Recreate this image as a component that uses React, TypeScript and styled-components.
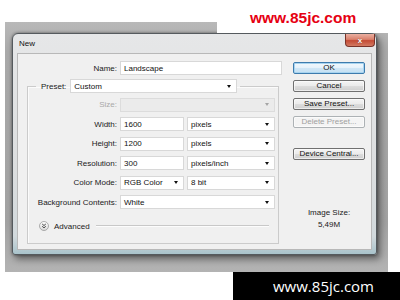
import React from 'react';
import styled, { createGlobalStyle } from 'styled-components';

const Global = createGlobalStyle`
  html, body { margin: 0; padding: 0; background: #fff; }
  body { width: 400px; height: 300px; overflow: hidden; font-family: "Liberation Sans", Arial, sans-serif; }
  * { box-sizing: border-box; }
`;

const Page = styled.div`
  position: relative;
  width: 400px;
  height: 300px;
  background: #fff;
  overflow: hidden;
`;

const Backdrop = styled.div`
  margin: 22px 0 0 5px;
  width: 383px;
  height: 250px;
  padding: 11px 0 0 7px;
  background: linear-gradient(to bottom, #b9b9b9 0%, #a9a9a9 12%, #a2a2a2 80%, #b3b3b3 100%);
`;

const Dialog = styled.div`
  width: 365px;
  height: 222px;
  display: flex;
  flex-direction: column;
  border: 1px solid #555a5e;
  border-radius: 6px 6px 3px 3px;
  background: linear-gradient(to bottom, #e6e7e8 0%, #dcdedf 60%, #d2d9dc 92%, #a9c3cb 100%);
  box-shadow: 0 0 3px rgba(0, 0, 0, 0.45), 3px 4px 7px rgba(0, 0, 0, 0.45);
`;

const TitleBar = styled.div`
  height: 19px;
  display: flex;
  align-items: flex-start;
  padding-left: 6px;
  flex-shrink: 0;
`;

const Title = styled.span`
  font-size: 8px;
  line-height: 19px;
  color: #111;
`;

const CloseButton = styled.div`
  margin-left: auto;
  margin-right: 1px;
  width: 30px;
  height: 13px;
  border: 1px solid #7a3329;
  border-top: none;
  border-radius: 0 0 4px 4px;
  background: linear-gradient(to bottom, #eab0a2 0%, #d9806c 45%, #c44b35 55%, #d27a62 100%);
  color: #fff;
  font-size: 8px;
  font-weight: bold;
  display: flex;
  align-items: center;
  justify-content: center;
  text-shadow: 0 0 1px #6a2a20;
`;

const Client = styled.div`
  margin: 0 4px;
  height: 197px;
  border: 1px solid #b8b8b8;
  background: #f0f0f0;
  display: flex;
`;

const FormColumn = styled.div`
  width: 275px;
  display: flex;
  flex-direction: column;
`;

const Row = styled.div<{ $mt?: number }>`
  display: flex;
  align-items: center;
  gap: 3px;
  height: 14px;
  margin-top: ${p => p.$mt ?? 0}px;
`;

const Label = styled.span<{ $w?: number; $disabled?: boolean }>`
  width: ${p => (p.$w ? `${p.$w}px` : 'auto')};
  flex-shrink: 0;
  text-align: right;
  font-size: 8px;
  color: ${p => (p.$disabled ? '#a8a8a8' : '#1a1a1a')};
  white-space: nowrap;
`;

const Field = styled.div<{ $w: number; $disabled?: boolean }>`
  width: ${p => p.$w}px;
  height: 14px;
  flex-shrink: 0;
  background: ${p => (p.$disabled ? '#ebebeb' : '#fff')};
  border: 1px solid ${p => (p.$disabled ? '#dcdcdc' : '#d8d8d8')};
  display: flex;
  align-items: center;
  justify-content: space-between;
  padding: 0 5px 0 3px;
  font-size: 8px;
  color: #111;
  white-space: nowrap;
`;

const Caret = styled.span<{ $disabled?: boolean }>`
  width: 0;
  height: 0;
  border-left: 2.5px solid transparent;
  border-right: 2.5px solid transparent;
  border-top: 3px solid ${p => (p.$disabled ? '#a5a5a5' : '#111')};
`;

const Group = styled.fieldset`
  margin: 4px 0 0 9px;
  padding: 0;
  width: 252px;
  min-inline-size: 0;
  border: 1px solid #cbcbcb;
  box-shadow: inset 1px 1px 0 #fbfbfb;
`;

const Legend = styled.legend`
  margin-left: 8px;
  padding: 0 3px 0 5px;
  display: flex;
  align-items: center;
  gap: 4px;
  height: 14px;
`;

const GroupBody = styled.div`
  display: flex;
  flex-direction: column;
  gap: 5.5px;
  padding: 4.5px 0 0 0;
`;

const AdvancedRow = styled.div`
  display: flex;
  align-items: center;
  height: 10px;
  margin: 12px 9px 12px 11px;
`;

const AdvancedText = styled.span`
  font-size: 8px;
  color: #1a1a1a;
  margin-left: 5px;
`;

const Rule = styled.div`
  flex: 1;
  height: 2px;
  margin-left: 6px;
  border-top: 1px solid #c8c8c8;
  border-bottom: 1px solid #fcfcfc;
`;

const ButtonColumn = styled.div`
  width: 72px;
  margin-left: 0;
  padding-top: 8px;
  display: flex;
  flex-direction: column;
  align-items: stretch;
`;

const Button = styled.div<{ $primary?: boolean; $disabled?: boolean; $mt?: number }>`
  height: 12px;
  margin-top: ${p => p.$mt ?? 0}px;
  border: 1px solid ${p => (p.$primary ? '#3d7bad' : p.$disabled ? '#adb2b5' : '#707070')};
  border-radius: 2px;
  background: ${p =>
    p.$primary
      ? 'linear-gradient(to bottom, #f2f8fc 0%, #e4f1fb 50%, #cfe6f6 51%, #c4e0f3 100%)'
      : p.$disabled
      ? '#f4f4f4'
      : 'linear-gradient(to bottom, #f4f4f4 0%, #ebebeb 50%, #dddddd 51%, #cfcfcf 100%)'};
  box-shadow: ${p => (p.$primary ? 'inset 0 0 0 1px #a7d4f0' : 'inset 0 0 0 1px rgba(255,255,255,0.6)')};
  font-size: 8px;
  line-height: 10px;
  text-align: center;
  color: ${p => (p.$disabled ? '#a0a0a0' : '#111')};
  white-space: nowrap;
`;

const InfoText = styled.div<{ $mt: number }>`
  margin-top: ${p => p.$mt}px;
  font-size: 8px;
  line-height: 10px;
  text-align: center;
  color: #1a1a1a;
`;

const WatermarkTop = styled.div`
  position: absolute;
  left: 217px;
  top: 0;
  width: 183px;
  height: 33px;
  background: #fff;
  padding: 9.6px 0 0 33px;
  color: #e60012;
  font-family: "Liberation Sans", Arial, sans-serif;
  font-weight: bold;
  font-size: 15.5px;
  line-height: 16px;
`;

const WatermarkBottom = styled.div`
  position: absolute;
  left: 233px;
  top: 272px;
  width: 167px;
  height: 28px;
  background: #000;
  color: #fff;
  padding-left: 40px;
  font-family: "Open Sans", "Noto Sans", sans-serif;
  font-size: 15px;
  line-height: 28px;
`;

const AdvancedIcon = () => (
  <svg width="10" height="10" viewBox="0 0 10 10">
    <defs>
      <linearGradient id="advg" x1="0" y1="0" x2="0" y2="1">
        <stop offset="0" stopColor="#ffffff" />
        <stop offset="1" stopColor="#d8d8d8" />
      </linearGradient>
    </defs>
    <circle cx="5" cy="5" r="4.5" fill="url(#advg)" stroke="#9a9a9a" strokeWidth="0.8" />
    <path d="M3.2 3 L5 4.5 L6.8 3 M3.2 5.3 L5 6.8 L6.8 5.3" fill="none" stroke="#333" strokeWidth="0.9" />
  </svg>
);

type SelectProps = { w: number; value?: string; disabled?: boolean };
const Select = ({ w, value, disabled }: SelectProps) => (
  <Field $w={w} $disabled={disabled}>
    <span>{value}</span>
    <Caret $disabled={disabled} />
  </Field>
);

export default function App() {
  return (
    <Page>
      <Global />
      <Backdrop>
        <Dialog>
          <TitleBar>
            <Title>New</Title>
            <CloseButton>x</CloseButton>
          </TitleBar>
          <Client>
            <FormColumn>
              <Row $mt={7}>
                <Label $w={99}>Name:</Label>
                <Field $w={162}>Landscape</Field>
              </Row>
              <Group>
                <Legend>
                  <Label>Preset:</Label>
                  <Select w={167} value="Custom" />
                </Legend>
                <GroupBody>
                  <Row>
                    <Label $w={89} $disabled>Size:</Label>
                    <Select w={155} disabled />
                  </Row>
                  <Row>
                    <Label $w={89}>Width:</Label>
                    <Field $w={64}>1600</Field>
                    <Select w={88} value="pixels" />
                  </Row>
                  <Row>
                    <Label $w={89}>Height:</Label>
                    <Field $w={64}>1200</Field>
                    <Select w={88} value="pixels" />
                  </Row>
                  <Row>
                    <Label $w={89}>Resolution:</Label>
                    <Field $w={64}>300</Field>
                    <Select w={88} value="pixels/inch" />
                  </Row>
                  <Row>
                    <Label $w={89}>Color Mode:</Label>
                    <Select w={64} value="RGB Color" />
                    <Select w={88} value="8 bit" />
                  </Row>
                  <Row>
                    <Label $w={89}>Background Contents:</Label>
                    <Select w={155} value="White" />
                  </Row>
                </GroupBody>
                <AdvancedRow>
                  <AdvancedIcon />
                  <AdvancedText>Advanced</AdvancedText>
                  <Rule />
                </AdvancedRow>
              </Group>
            </FormColumn>
            <ButtonColumn>
              <Button $primary>OK</Button>
              <Button $mt={6}>Cancel</Button>
              <Button $mt={6}>Save Preset...</Button>
              <Button $mt={6} $disabled>Delete Preset...</Button>
              <Button $mt={20}>Device Central...</Button>
              <InfoText $mt={48}>Image Size:</InfoText>
              <InfoText $mt={2}>5,49M</InfoText>
            </ButtonColumn>
          </Client>
        </Dialog>
      </Backdrop>
      <WatermarkTop>www.85jc.com</WatermarkTop>
      <WatermarkBottom>www.85jc.com</WatermarkBottom>
    </Page>
  );
}
